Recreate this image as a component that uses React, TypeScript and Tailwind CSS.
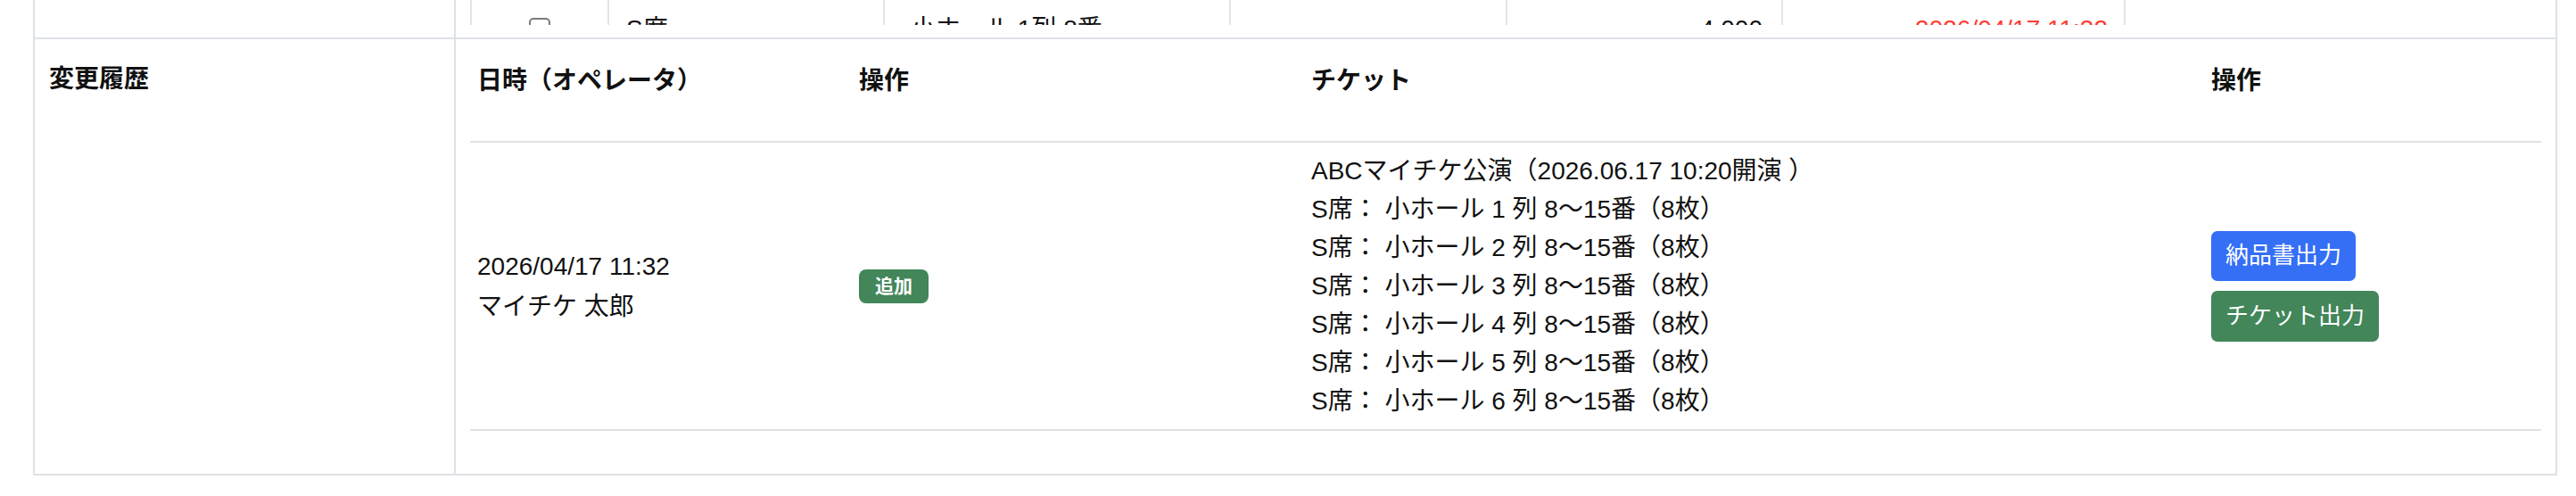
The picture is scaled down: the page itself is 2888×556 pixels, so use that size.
const font = '[font-family:"Liberation_Sans","Noto_Sans_CJK_JP",sans-serif]'

const tickets = [
  'ABCマイチケ公演（2026.06.17 10:20開演 ）',
  'S席： 小ホール 1 列 8〜15番（8枚）',
  'S席： 小ホール 2 列 8〜15番（8枚）',
  'S席： 小ホール 3 列 8〜15番（8枚）',
  'S席： 小ホール 4 列 8〜15番（8枚）',
  'S席： 小ホール 5 列 8〜15番（8枚）',
  'S席： 小ホール 6 列 8〜15番（8枚）',
]

function SeatRowPeek() {
  // bottom of the seat list above, clipped by its scroll box
  return (
    <div className="h-[28px] overflow-hidden">
      <div className="flex h-[60px] text-[28px] leading-[42px] text-[#111]">
        <div className="flex w-[154px] justify-center border-l-2 border-[#e4e4e4]">
          <span className="mt-[20px] h-[24px] w-[24px] rounded-[5px] border-2 border-[#7a7a7a] bg-white" />
        </div>
        <div className="w-[309px] border-l-2 border-[#e4e4e4] pl-[19px] pt-[12px]">S席</div>
        <div className="w-[388px] border-l-2 border-[#e4e4e4] pl-[29px] pt-[12px]">小ホール 1列 8番</div>
        <div className="w-[310px] border-l-2 border-[#e4e4e4]" />
        <div className="w-[309px] border-l-2 border-[#e4e4e4] pr-[21px] pt-[12px] text-right">4,000</div>
        <div className="w-[386px] border-x-2 border-[#e4e4e4] pr-[18px] pt-[12px] text-right text-[#ff3b30]">
          2026/04/17 11:32
        </div>
      </div>
    </div>
  )
}

export default function App() {
  return (
    <div className={`min-h-[556px] bg-white ${font} text-[#111]`}>
      <div className="ml-[37px] w-[2830px] border-x-2 border-b-2 border-[#dee2e6]">
        {/* previous row */}
        <div className="flex h-[44px] border-b-2 border-[#dee2e6]">
          <div className="w-[472px] shrink-0 border-r-2 border-[#dee2e6]" />
          <div className="flex-1 px-[16px]">
            <SeatRowPeek />
          </div>
        </div>

        {/* history row */}
        <div className="flex">
          <div className="w-[472px] shrink-0 border-r-2 border-[#dee2e6] px-[16px] pt-[24px] text-[28px] font-bold leading-[42px]">
            変更履歴
          </div>
          <div className="flex-1 px-[16px] pt-[16px] pb-[48px]">
            <div className="flex h-[100px] border-b-2 border-[#dee2e6] text-[28px] font-bold leading-[42px]">
              <div className="w-[428px] px-[8px] pt-[10px]">日時（オペレータ）</div>
              <div className="w-[507px] px-[8px] pt-[10px]">操作</div>
              <div className="w-[1009px] px-[8px] pt-[10px]">チケット</div>
              <div className="w-[378px] px-[8px] pt-[10px]">操作</div>
            </div>
            <div className="flex border-b-2 border-[#dee2e6] text-[28px] leading-[43px]">
              <div className="flex w-[428px] flex-col justify-center px-[8px]">
                <span className="leading-[45px]">2026/04/17 11:32</span>
                <span className="leading-[45px]">マイチケ 太郎</span>
              </div>
              <div className="flex w-[507px] items-center px-[8px]">
                <span className="rounded-[8px] bg-[#42865a] px-[18px] py-[8px] text-[21px] font-bold leading-[22px] text-white">
                  追加
                </span>
              </div>
              <div className="flex w-[1009px] flex-col px-[8px] py-[10px]">
                {tickets.map((t) => (
                  <span key={t}>{t}</span>
                ))}
              </div>
              <div className="flex w-[378px] flex-col items-start justify-center gap-[11px] px-[8px]">
                <button className="flex h-[56px] items-center rounded-[7px] bg-[#346ff6] px-[16px] text-[26px] leading-[39px] text-white">
                  納品書出力
                </button>
                <button className="flex h-[57px] items-center rounded-[7px] bg-[#42865a] px-[16px] text-[26px] leading-[39px] text-white">
                  チケット出力
                </button>
              </div>
            </div>
          </div>
        </div>
      </div>
    </div>
  )
}
